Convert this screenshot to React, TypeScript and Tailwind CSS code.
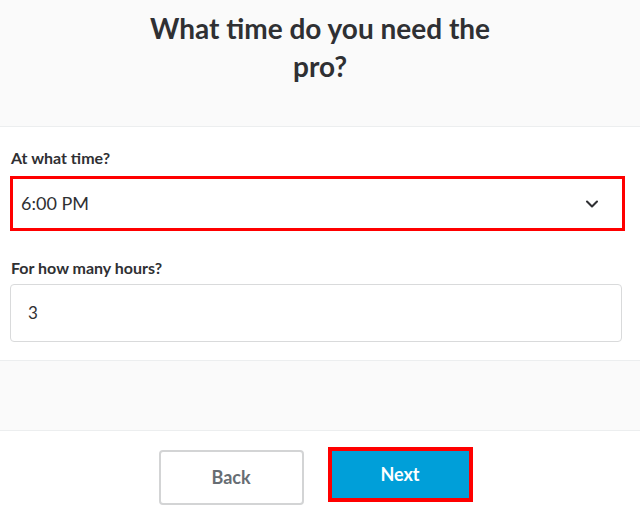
import { ChevronDown } from "lucide-react";

export default function App() {
  return (
    <div className="h-[516px] w-[640px] overflow-hidden bg-white font-['Lato','Noto_Sans',sans-serif] text-[#2f3033]">
      {/* Title */}
      <div className="h-[127px] border-b border-[#eceeef] bg-[#fafafa] pt-[9px]">
        <h1 className="mx-auto w-[370px] text-center text-[28px] font-bold leading-[38px]">
          What time do you need the pro?
        </h1>
      </div>

      {/* Fields */}
      <div className="px-[10px] pt-[19px] pb-[18px]">
        <label className="block pl-px text-[16px] font-bold leading-6">At what time?</label>
        <div className="mt-[6px] flex h-[55px] w-[615px] items-center justify-between border-[3px] border-[#ff0000] pl-[8px] pr-[20px]">
          <span className="text-[18px] text-[#2f3033]">6:00 PM</span>
          <ChevronDown className="h-5 w-5 text-[#2f3033]" strokeWidth={2.5} />
        </div>

        <label className="mt-[25px] block pl-px text-[16px] font-bold leading-6">For how many hours?</label>
        <div className="mt-[4px] flex h-[58px] w-[612px] items-center rounded border border-[#d9dadb] pl-[17px]">
          <span className="text-[17px] text-[#2f3033]">3</span>
        </div>
      </div>

      <div className="h-[71px] border-y border-[#eceeef] bg-[#fafafa]" />

      {/* Actions */}
      <div className="flex items-start justify-center gap-[24px] pt-[16px] pr-[9px]">
        <button className="mt-[3px] h-[55px] w-[145px] rounded border-2 border-[#d3d4d5] bg-white text-[18px] font-bold text-[#676d73]">
          Back
        </button>
        <button className="h-[55px] w-[145px] border-4 border-[#ff0000] bg-[#009fd9] text-[18px] font-bold text-white">
          Next
        </button>
      </div>
    </div>
  );
}
